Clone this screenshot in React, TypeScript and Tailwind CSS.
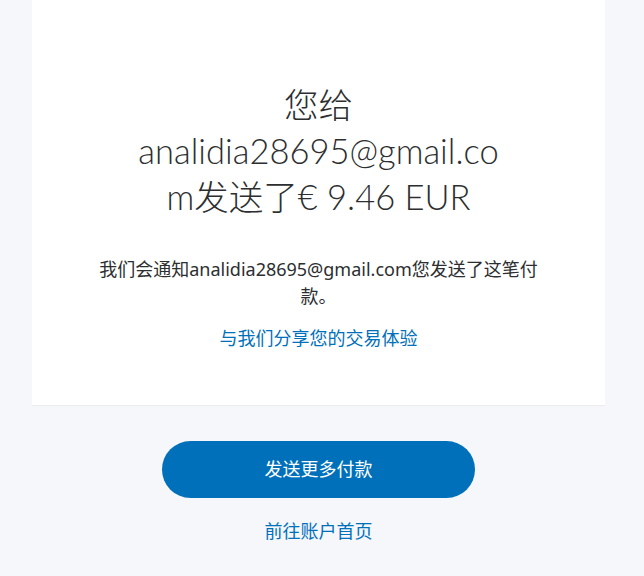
import React from "react";

export default function App() {
  const sans = {
    fontFamily:
      '"Lato", "Noto Sans CJK SC", "Noto Sans", sans-serif',
  } as React.CSSProperties;
  return (
    <div
      className="min-h-[576px] w-[644px] bg-[#f5f7fa] pl-[32px] pr-[39px]"
      style={sans}
    >
      <div className="flex h-[406px] w-[573px] flex-col items-center border-b border-[#eaeced] bg-white pt-[82px]">
        <h1 className="w-[420px] text-center text-[34.5px] font-light leading-[46px] text-[#2c2e2f]">
          您给
          <br />
          analidia28695@gmail.co
          <br />
          m发送了€ 9.46 EUR
        </h1>
        <p className="mt-[36px] text-center text-[18px] leading-[27px] text-[#2c2e2f] [font-family:'Noto_Sans','Noto_Sans_CJK_SC',sans-serif]">
          我们会通知analidia28695@gmail.com您发送了这笔付
          <br />
          款。
        </p>
        <a className="mt-[15px] text-[18px] leading-[27px] text-[#0070ba] [font-family:'Noto_Sans','Noto_Sans_CJK_SC',sans-serif]">
          与我们分享您的交易体验
        </a>
      </div>
      <div className="flex flex-col items-center [font-family:'Noto_Sans','Noto_Sans_CJK_SC',sans-serif]">
        <button className="mt-[35px] h-[57px] w-[313px] rounded-full bg-[#0070ba] text-[18px] text-white">
          发送更多付款
        </button>
        <a className="mt-[20px] text-[18px] leading-[27px] text-[#0070ba]">
          前往账户首页
        </a>
      </div>
    </div>
  );
}
